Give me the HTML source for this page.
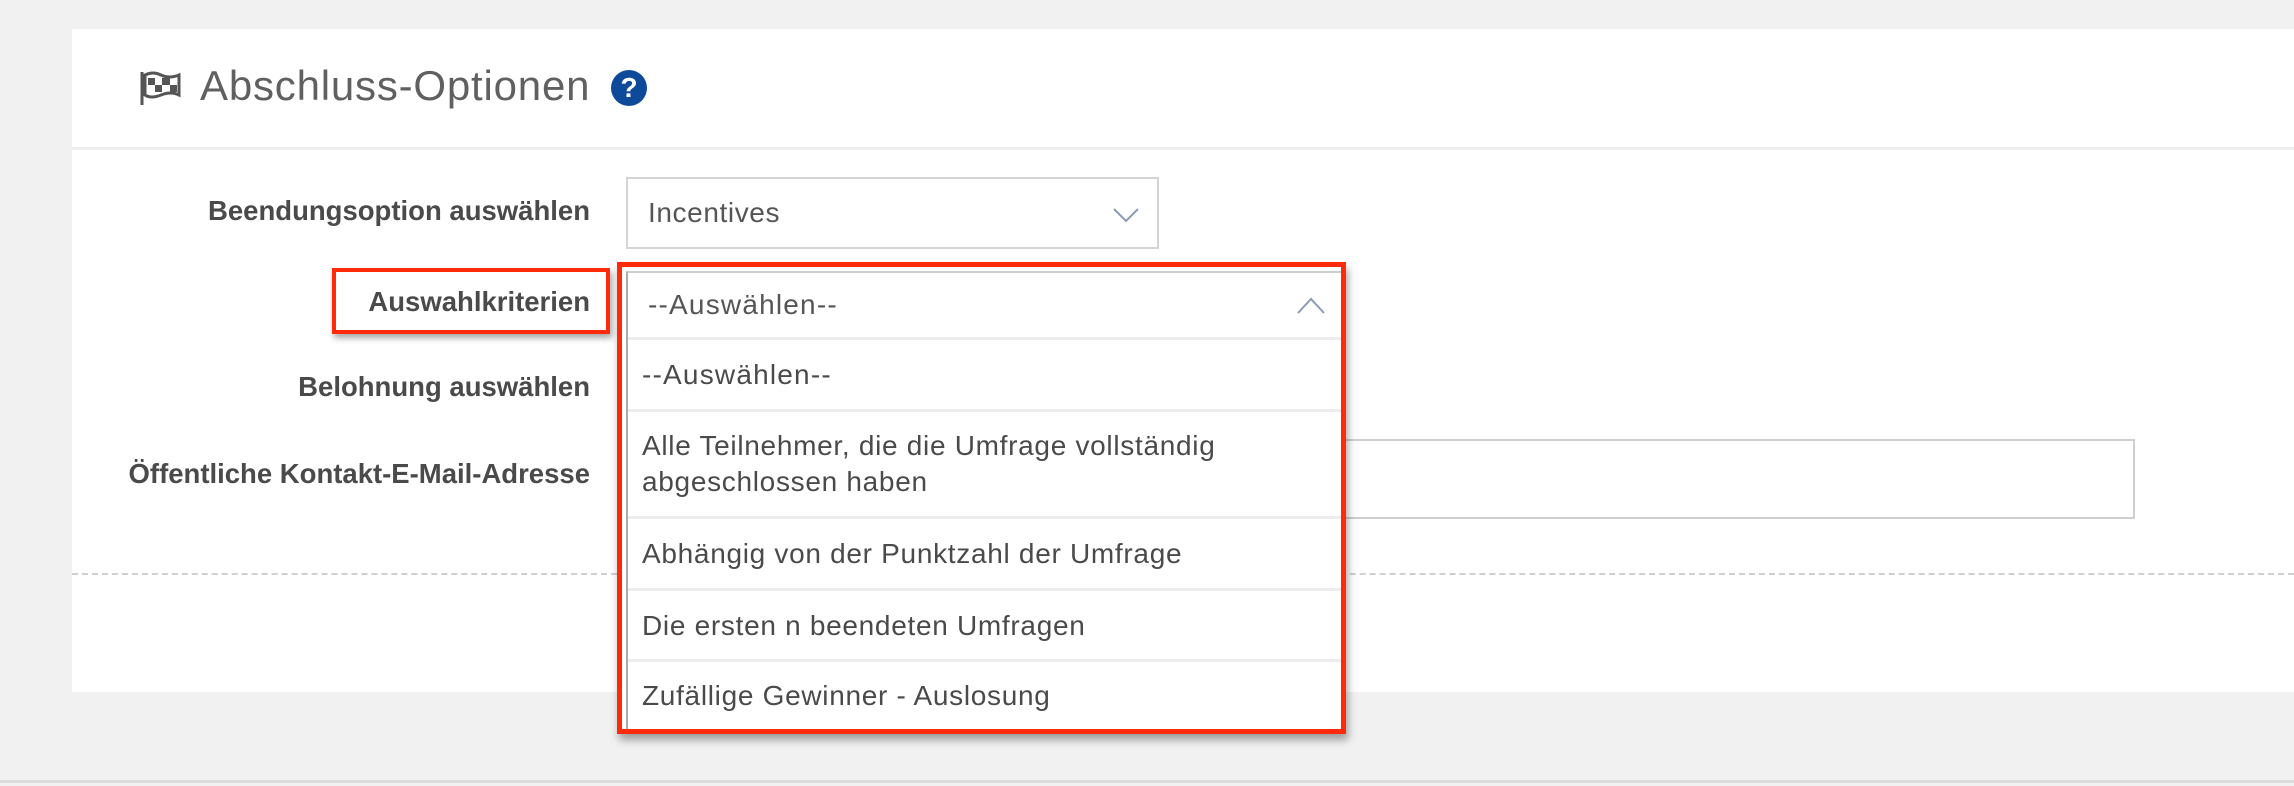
<!DOCTYPE html>
<html><head><meta charset="utf-8"><style>
*{box-sizing:border-box;margin:0;padding:0}
body{width:2294px;height:786px;background:#f1f1f1;position:relative;overflow:hidden;font-family:"Liberation Sans",sans-serif;color:#4a4a4a}
.card{position:absolute;left:72px;top:29px;width:2222px;height:663px;background:#fff}
.hdiv{position:absolute;left:72px;top:147px;width:2222px;height:3px;background:#eeeef0}
.title{position:absolute;left:200px;top:62px;font-size:42px;color:#606060;letter-spacing:0.8px}
.help{position:absolute;left:611px;top:70px;width:36px;height:36px;border-radius:50%;background:#0d4a9a;color:#fff;font-weight:bold;font-size:28px;text-align:center;line-height:36px}
.lbl{position:absolute;right:1704px;font-weight:bold;font-size:27.5px;color:#4a4a4a;white-space:nowrap}
.sel{position:absolute;left:626px;top:177px;width:533px;height:72px;border:2px solid #d4d4d4;background:#fff}
.sel span{position:absolute;left:20px;top:18px;font-size:28px;letter-spacing:0.6px;color:#555}
.email{position:absolute;left:1300px;top:439px;width:835px;height:80px;border:2px solid #cfcfcf;background:#fff}
.dash{position:absolute;left:72px;top:573px;width:2222px;border-top:2px dashed #d0d0d0}
.bot{position:absolute;left:0;top:780px;width:2294px;height:3px;background:#dcdcdc}
.lbox{position:absolute;left:332px;top:268px;width:278px;height:66px;border:4px solid #ff2a0a;box-shadow:2px 4px 6px rgba(0,0,0,.35)}
.dd{position:absolute;left:617px;top:262px;width:729px;height:472px;border:5px solid #ff2a0a;background:#fff;box-shadow:2px 6px 8px rgba(0,0,0,.35)}
.dd .in{position:absolute;left:4px;top:4px;right:0;bottom:0;border-left:2px solid #aaa;border-top:2px solid #ccc}
.opt{position:absolute;left:0;right:0;border-bottom:3px solid #ececec;font-size:28px;letter-spacing:0.7px;color:#4a4a4a;padding-left:14px;line-height:36px;white-space:nowrap}
</style></head><body>
<div class="card"></div>
<div class="hdiv"></div>
<svg style="position:absolute;left:139px;top:70px" width="46" height="36" viewBox="0 0 46 36">
<line x1="3" y1="2" x2="3" y2="35" stroke="#555" stroke-width="3"/>
<path d="M6 5 Q14 1 22 5 T40 5 L40 25 Q32 21 22 25 T6 25 Z" fill="none" stroke="#555" stroke-width="3"/>
<rect x="9" y="8" width="7" height="7" fill="#555"/><rect x="23" y="8" width="8" height="7" fill="#555"/>
<rect x="16" y="15" width="7" height="7" fill="#555"/><rect x="31" y="15" width="7" height="7" fill="#555"/>
</svg>
<div class="title">Abschluss-Optionen</div>
<div class="help">?</div>
<div class="lbl" style="top:195px">Beendungsoption auswählen</div>
<div class="lbl" style="top:286px">Auswahlkriterien</div>
<div class="lbl" style="top:371px">Belohnung auswählen</div>
<div class="lbl" style="top:458px">Öffentliche Kontakt-E-Mail-Adresse</div>
<div class="sel"><span>Incentives</span>
<svg style="position:absolute;left:485px;top:28px" width="26" height="16"><polyline points="1,2 13,14 25,2" fill="none" stroke="#8a9bb5" stroke-width="2"/></svg></div>
<div class="email"></div>
<div class="dash"></div>
<div class="bot"></div>
<div class="lbox"></div>
<div class="dd"><div class="in">
<div class="opt" style="top:0;height:67px;padding-left:20px;line-height:64px;color:#555;letter-spacing:1.2px">--Auswählen--
<svg style="position:absolute;right:16px;top:24px" width="28" height="18"><polyline points="1,16 14,2 27,16" fill="none" stroke="#8a9bb5" stroke-width="2"/></svg></div>
<div class="opt" style="top:67px;height:72px;line-height:70px;letter-spacing:1.2px">--Auswählen--</div>
<div class="opt" style="top:139px;height:107px;padding-top:16px">Alle Teilnehmer, die die Umfrage vollständig<br>abgeschlossen haben</div>
<div class="opt" style="top:246px;height:72px;line-height:70px">Abhängig von der Punktzahl der Umfrage</div>
<div class="opt" style="top:318px;height:71px;line-height:69px">Die ersten n beendeten Umfragen</div>
<div class="opt" style="top:389px;height:70px;line-height:68px;border-bottom:none">Zufällige Gewinner - Auslosung</div>
</div></div>
</body></html>
